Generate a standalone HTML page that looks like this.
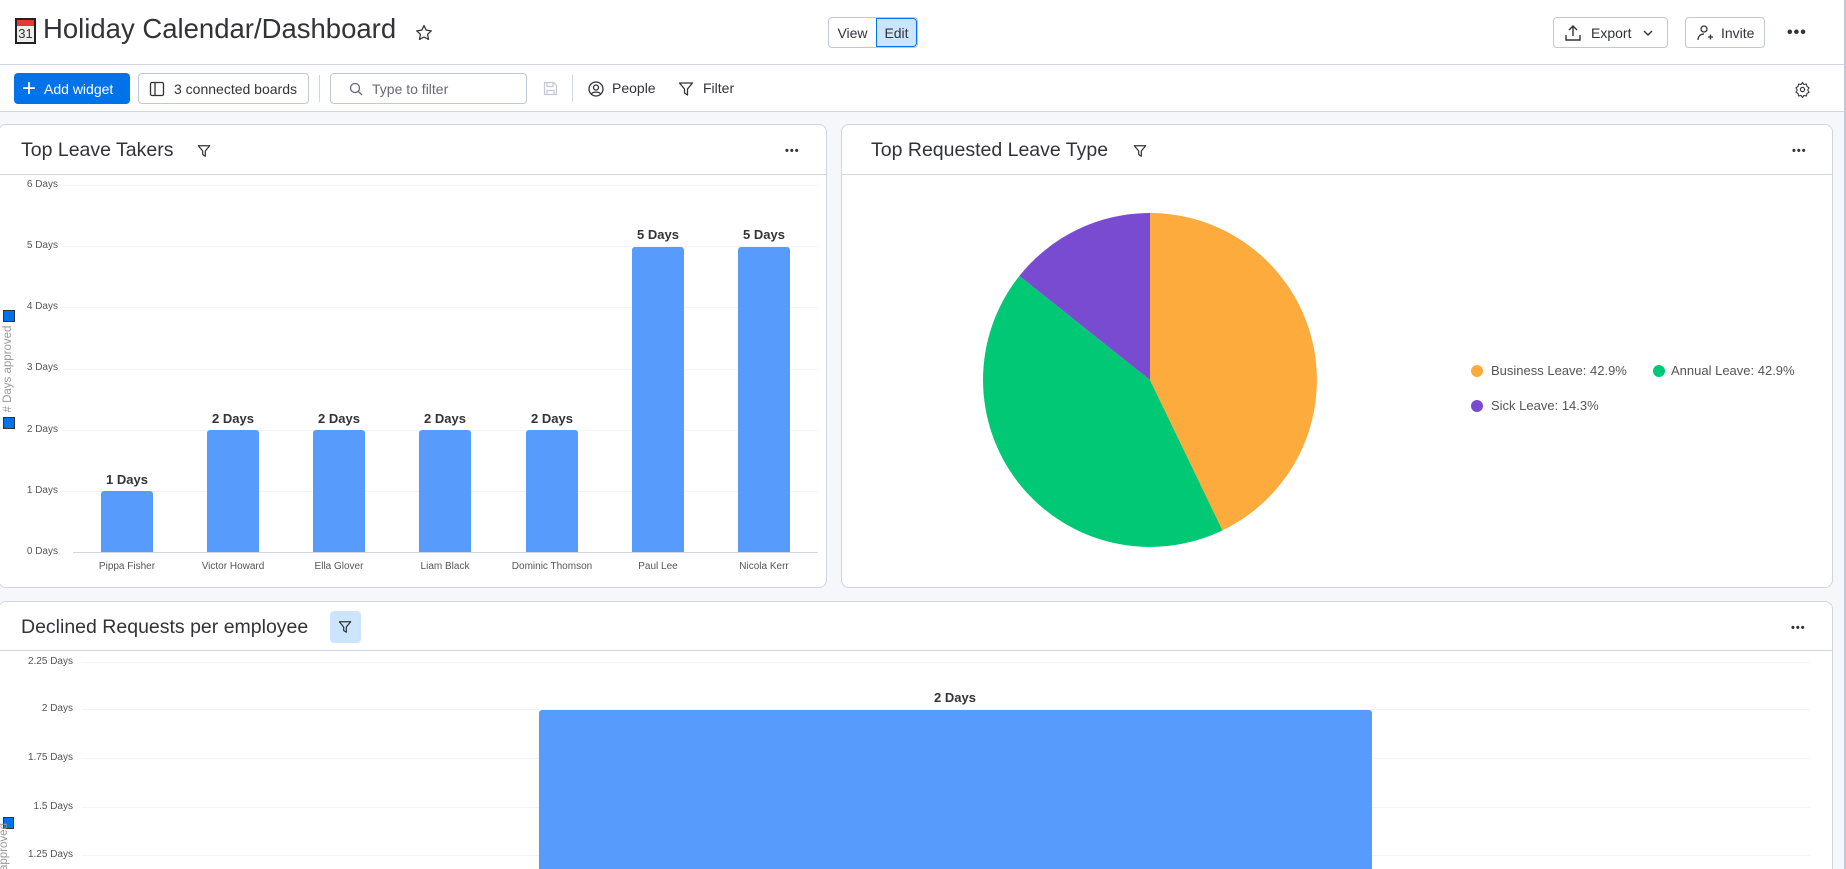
<!DOCTYPE html>
<html style="width:1846px;height:869px;overflow:hidden"><head><meta charset="utf-8"><style>
*{box-sizing:border-box;margin:0;padding:0}
body{width:1846px;height:869px;overflow:hidden;background:#f6f7fb;font-family:"Liberation Sans",sans-serif;color:#323338;position:relative}
.abs{position:absolute}
.hdr{left:0;top:0;width:1846px;height:65px;background:#fff;border-bottom:1px solid #d0d4e4}
.tb{left:0;top:65px;width:1846px;height:47px;background:#fff;border-bottom:1px solid #d0d4e4}
.btn{position:absolute;border:1px solid #c3c6d4;border-radius:4px;background:#fff;font-size:14px;display:flex;align-items:center;color:#323338}
.panel{position:absolute;background:#fff;border:1px solid #d0d4e4;border-radius:8px;overflow:hidden}
.ptitle{position:absolute;font-size:19.5px;color:#323338}
.hline{position:absolute;left:0;right:0;height:1px;background:#d0d4e4}
.yl{position:absolute;font-size:10px;color:#555;text-align:right;width:60px}
.gl{position:absolute;height:1px;background:#f3f4f7}
.bar{position:absolute;background:#579bfc;border-radius:3px 3px 0 0}
.vl{position:absolute;font-size:13px;font-weight:bold;color:#323338;text-align:center;width:100px}
.xl{position:absolute;font-size:10px;color:#555;text-align:center;width:110px}
.dots{position:absolute;font-size:16px;letter-spacing:1px;color:#323338;font-weight:bold}
</style></head><body>
<div class="abs hdr">
 <div class="abs" style="left:15px;top:18px;width:21px;height:26px;border:2px solid #222;background:#eee">
  <div style="height:6px;background:#e53935"></div>
  <div style="font-size:13px;text-align:center;line-height:16px;color:#333">31</div>
 </div>
 <div class="abs" style="left:43px;top:13px;font-size:27.5px;color:#323338">Holiday Calendar/Dashboard</div>
 <svg class="abs" style="left:414px;top:23px" width="20" height="20" viewBox="0 0 24 24"><path d="M12 3l2.7 5.6 6.1.8-4.5 4.2 1.1 6.1L12 16.8 6.6 19.7l1.1-6.1L3.2 9.4l6.1-.8z" fill="none" stroke="#323338" stroke-width="1.5" stroke-linejoin="round"/></svg>
 <div class="btn" style="left:828px;top:17px;width:90px;height:31px;overflow:hidden">
  <div style="width:47px;text-align:center">View</div>
  <div style="flex:1;height:100%;background:#cce5ff;border:1px solid #0073ea;border-radius:0 4px 4px 0;display:flex;align-items:center;justify-content:center">Edit</div>
 </div>
 <div class="btn" style="left:1553px;top:17px;width:115px;height:31px;padding-left:10px">
  <svg width="18" height="18" viewBox="0 0 18 18"><path d="M9 12V2M5 6l4-4 4 4M2 11v5h14v-5" fill="none" stroke="#323338" stroke-width="1.4"/></svg>
  <span style="margin-left:9px">Export</span>
  <svg style="margin-left:12px" width="10" height="6" viewBox="0 0 10 6"><path d="M1 1l4 4 4-4" fill="none" stroke="#323338" stroke-width="1.4"/></svg>
 </div>
 <div class="btn" style="left:1685px;top:17px;width:80px;height:31px;padding-left:10px">
  <svg width="18" height="18" viewBox="0 0 18 18"><circle cx="8" cy="5" r="3" fill="none" stroke="#323338" stroke-width="1.3"/><path d="M2 16c0-4 3-6 6-6M12 13h5M14.5 10.5v5" fill="none" stroke="#323338" stroke-width="1.3"/></svg>
  <span style="margin-left:7px">Invite</span>
 </div>
 <div class="dots" style="left:1787px;top:24px">•••</div>
</div>
<div class="abs tb">
 <div class="abs" style="left:14px;top:8px;width:116px;height:31px;background:#0073ea;border-radius:4px;color:#fff;font-size:14px;display:flex;align-items:center;padding-left:8px">
  <span style="font-size:24px;font-weight:300;line-height:20px">+</span><span style="margin-left:8px">Add widget</span></div>
 <div class="btn" style="left:138px;top:8px;width:171px;height:31px;padding-left:10px">
  <svg width="16" height="16" viewBox="0 0 16 16"><rect x="1.5" y="1.5" width="13" height="13" rx="1.5" fill="none" stroke="#323338" stroke-width="1.3"/><path d="M6 1.5v13" stroke="#323338" stroke-width="1.3"/></svg>
  <span style="margin-left:9px">3 connected boards</span></div>
 <div class="abs" style="left:319px;top:10px;width:1px;height:27px;background:#d0d4e4"></div>
 <div class="btn" style="left:330px;top:8px;width:197px;height:31px;padding-left:18px;color:#676879">
  <svg width="14" height="14" viewBox="0 0 14 14"><circle cx="6" cy="6" r="4.5" fill="none" stroke="#676879" stroke-width="1.3"/><path d="M9.5 9.5l3.5 3.5" stroke="#676879" stroke-width="1.3"/></svg>
  <span style="margin-left:9px">Type to filter</span></div>
 <svg class="abs" style="left:543px;top:16px" width="15" height="15" viewBox="0 0 15 15"><path d="M1.5 1.5h9l3 3v9h-12z M4 1.5v4h6v-4 M4 13.5v-4h7v4" fill="none" stroke="#c3c6d4" stroke-width="1.2"/></svg>
 <div class="abs" style="left:572px;top:10px;width:1px;height:27px;background:#d0d4e4"></div>
 <svg class="abs" style="left:588px;top:16px" width="16" height="16" viewBox="0 0 16 16"><circle cx="8" cy="8" r="7" fill="none" stroke="#323338" stroke-width="1.3"/><circle cx="8" cy="6.5" r="2.5" fill="none" stroke="#323338" stroke-width="1.3"/><path d="M3.5 13c1-2.5 8-2.5 9 0" fill="none" stroke="#323338" stroke-width="1.3"/></svg>
 <div class="abs" style="left:612px;top:15px;font-size:14px">People</div>
 <svg class="abs" style="left:678px;top:16px" width="16" height="16" viewBox="0 0 16 16"><path d="M1.5 2h13l-5 6v6l-3-2v-4z" fill="none" stroke="#323338" stroke-width="1.3" stroke-linejoin="round"/></svg>
 <div class="abs" style="left:703px;top:15px;font-size:14px">Filter</div>
 <svg class="abs" style="left:1794px;top:16px" width="17" height="17" viewBox="0 0 24 24"><circle cx="12" cy="12" r="3" fill="none" stroke="#323338" stroke-width="1.6"/><path d="M12 2l2 3 3.5-.8.8 3.5 3 2-2 3 2 3-3 2-.8 3.5-3.5-.8-2 3-2-3-3.5.8-.8-3.5-3-2 2-3-2-3 3-2 .8-3.5 3.5.8z" fill="none" stroke="#323338" stroke-width="1.5" stroke-linejoin="round"/></svg>
</div>
<div class="abs" style="left:1844px;top:0;width:2px;height:869px;background:#c3c6d4"></div>

<!-- Left panel -->
<div class="panel" style="left:-2px;top:124px;width:829px;height:464px">
 <div class="ptitle" style="left:22px;top:14px">Top Leave Takers</div>
 <svg class="abs" style="left:198px;top:19px" width="14" height="14" viewBox="0 0 16 16"><path d="M1.5 2h13l-5 6v6l-3-2v-4z" fill="none" stroke="#323338" stroke-width="1.4" stroke-linejoin="round"/></svg>
 <div class="dots" style="left:786px;top:20px;font-size:11px">•••</div>
 <div class="hline" style="top:49px"></div>
</div>
<div class="abs" style="left:0;top:0">
 <div class="yl" style="left:-2px;top:179px">6 Days</div><div class="gl" style="left:63px;width:755px;top:185px"></div>
 <div class="yl" style="left:-2px;top:240px">5 Days</div><div class="gl" style="left:63px;width:755px;top:246px"></div>
 <div class="yl" style="left:-2px;top:301px">4 Days</div><div class="gl" style="left:63px;width:755px;top:307px"></div>
 <div class="yl" style="left:-2px;top:362px">3 Days</div><div class="gl" style="left:63px;width:755px;top:369px"></div>
 <div class="yl" style="left:-2px;top:424px">2 Days</div><div class="gl" style="left:63px;width:755px;top:430px"></div>
 <div class="yl" style="left:-2px;top:485px">1 Days</div><div class="gl" style="left:63px;width:755px;top:491px"></div>
 <div class="yl" style="left:-2px;top:546px">0 Days</div><div class="gl" style="left:73px;width:745px;top:552px;background:#d0d4e4"></div>
 <div class="abs" style="left:3px;top:310px;width:12px;height:12px;background:#0073ea;border:1px solid #333"></div>
 <div class="abs" style="left:3px;top:417px;width:12px;height:12px;background:#0073ea;border:1px solid #333"></div>
 <div class="abs" style="left:-38px;top:363px;width:92px;font-size:11.5px;color:#999;transform:rotate(-90deg);text-align:center"># Days approved</div>
 <div class="bar" style="left:101px;width:52px;top:491px;height:61px"></div>
 <div class="bar" style="left:207px;width:52px;top:430px;height:122px"></div>
 <div class="bar" style="left:313px;width:52px;top:430px;height:122px"></div>
 <div class="bar" style="left:419px;width:52px;top:430px;height:122px"></div>
 <div class="bar" style="left:526px;width:52px;top:430px;height:122px"></div>
 <div class="bar" style="left:632px;width:52px;top:247px;height:305px"></div>
 <div class="bar" style="left:738px;width:52px;top:247px;height:305px"></div>
 <div class="vl" style="left:77px;top:472px">1 Days</div>
 <div class="vl" style="left:183px;top:411px">2 Days</div>
 <div class="vl" style="left:289px;top:411px">2 Days</div>
 <div class="vl" style="left:395px;top:411px">2 Days</div>
 <div class="vl" style="left:502px;top:411px">2 Days</div>
 <div class="vl" style="left:608px;top:227px">5 Days</div>
 <div class="vl" style="left:714px;top:227px">5 Days</div>
 <div class="xl" style="left:72px;top:561px">Pippa Fisher</div>
 <div class="xl" style="left:178px;top:561px">Victor Howard</div>
 <div class="xl" style="left:284px;top:561px">Ella Glover</div>
 <div class="xl" style="left:390px;top:561px">Liam Black</div>
 <div class="xl" style="left:497px;top:561px">Dominic Thomson</div>
 <div class="xl" style="left:603px;top:561px">Paul Lee</div>
 <div class="xl" style="left:709px;top:561px">Nicola Kerr</div>
</div>

<!-- Right panel -->
<div class="panel" style="left:841px;top:124px;width:992px;height:464px">
 <div class="ptitle" style="left:29px;top:14px">Top Requested Leave Type</div>
 <svg class="abs" style="left:291px;top:19px" width="14" height="14" viewBox="0 0 16 16"><path d="M1.5 2h13l-5 6v6l-3-2v-4z" fill="none" stroke="#323338" stroke-width="1.4" stroke-linejoin="round"/></svg>
 <div class="dots" style="left:950px;top:20px;font-size:11px">•••</div>
 <div class="hline" style="top:49px"></div>
 <svg class="abs" style="left:141px;top:88px" width="334" height="334" viewBox="-167 -167 334 334">
  <path d="M0 0L0 -167A167 167 0 0 1 72.5 150.4Z" fill="#fdab3d"/>
  <path d="M0 0L72.5 150.4A167 167 0 0 1 -130.6 -104.1Z" fill="#00c875"/>
  <path d="M0 0L-130.6 -104.1A167 167 0 0 1 0 -167Z" fill="#784bd1"/>
 </svg>
 <div class="abs" style="left:629px;top:240px;width:12px;height:12px;border-radius:6px;background:#fdab3d"></div>
 <div class="abs" style="left:649px;top:238px;font-size:13px;color:#555">Business Leave: 42.9%</div>
 <div class="abs" style="left:811px;top:240px;width:12px;height:12px;border-radius:6px;background:#00c875"></div>
 <div class="abs" style="left:829px;top:238px;font-size:13px;color:#555">Annual Leave: 42.9%</div>
 <div class="abs" style="left:629px;top:275px;width:12px;height:12px;border-radius:6px;background:#784bd1"></div>
 <div class="abs" style="left:649px;top:273px;font-size:13px;color:#555">Sick Leave: 14.3%</div>
</div>

<!-- Bottom panel -->
<div class="panel" style="left:-2px;top:601px;width:1835px;height:268px;border-bottom:none;border-radius:8px 8px 0 0">
 <div class="ptitle" style="left:22px;top:14px">Declined Requests per employee</div>
 <div class="abs" style="left:331px;top:9px;width:31px;height:32px;background:#cce5ff;border-radius:4px"></div>
 <svg class="abs" style="left:339px;top:18px" width="14" height="14" viewBox="0 0 16 16"><path d="M1.5 2h13l-5 6v6l-3-2v-4z" fill="none" stroke="#323338" stroke-width="1.4" stroke-linejoin="round"/></svg>
 <div class="dots" style="left:1792px;top:20px;font-size:11px">•••</div>
 <div class="hline" style="top:48px"></div>
</div>
<div class="abs" style="left:0;top:0;width:1846px;height:869px;overflow:hidden">
 <div class="yl" style="left:13px;top:656px">2.25 Days</div><div class="gl" style="left:82px;width:1728px;top:662px"></div>
 <div class="yl" style="left:13px;top:703px">2 Days</div><div class="gl" style="left:82px;width:1728px;top:709px"></div>
 <div class="yl" style="left:13px;top:752px">1.75 Days</div><div class="gl" style="left:82px;width:1728px;top:758px"></div>
 <div class="yl" style="left:13px;top:801px">1.5 Days</div><div class="gl" style="left:82px;width:1728px;top:807px"></div>
 <div class="yl" style="left:13px;top:849px">1.25 Days</div><div class="gl" style="left:82px;width:1728px;top:855px"></div>
 <div class="abs" style="left:3px;top:817px;width:11px;height:12px;background:#0073ea;border:1px solid #333"></div>
 <div class="abs" style="left:-25px;top:840px;width:60px;height:14px;font-size:11.5px;color:#999;transform:rotate(-90deg);text-align:center">approved</div>
 <div class="bar" style="left:539px;width:833px;top:710px;height:159px"></div>
 <div class="vl" style="left:905px;top:690px">2 Days</div>
</div>
</body></html>
